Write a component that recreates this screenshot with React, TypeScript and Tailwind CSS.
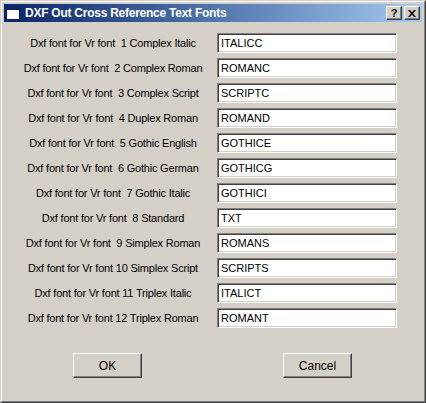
import React from "react"

const rows = [
  { n: " 1", name: "Complex Italic", value: "ITALICC" },
  { n: " 2", name: "Complex Roman", value: "ROMANC" },
  { n: " 3", name: "Complex Script", value: "SCRIPTC" },
  { n: " 4", name: "Duplex Roman", value: "ROMAND" },
  { n: " 5", name: "Gothic English", value: "GOTHICE" },
  { n: " 6", name: "Gothic German", value: "GOTHICG" },
  { n: " 7", name: "Gothic Italic", value: "GOTHICI" },
  { n: " 8", name: "Standard", value: "TXT" },
  { n: " 9", name: "Simplex Roman", value: "ROMANS" },
  { n: "10", name: "Simplex Script", value: "SCRIPTS" },
  { n: "11", name: "Triplex Italic", value: "ITALICT" },
  { n: "12", name: "Triplex Roman", value: "ROMANT" },
]

function CaptionButton({ children }: { children: React.ReactNode }) {
  return (
    <div className="w-[16px] h-[14px] bg-[#d4d0c8] border-t border-l border-white border-r border-b border-r-[#404040] border-b-[#404040] shadow-[inset_-1px_-1px_0_#808080] flex items-center justify-center text-black text-[11px] font-bold leading-none">
      {children}
    </div>
  )
}

function Button({ label }: { label: string }) {
  return (
    <div className="w-[69px] h-[25px] bg-[#d4d0c8] border border-t-white border-l-white border-r-[#404040] border-b-[#404040] shadow-[inset_-1px_-1px_0_#808080] flex items-center justify-center text-[12px] text-black">
      {label}
    </div>
  )
}

export default function App() {
  return (
    <div
      className="w-[426px] h-[403px] bg-[#d4d0c8] border border-t-[#d4d0c8] border-l-[#d4d0c8] border-r-[#404040] border-b-[#404040]"
      style={{ fontFamily: '"Liberation Sans", Arial, sans-serif' }}
    >
      <div className="h-full border border-t-white border-l-white border-r-[#808080] border-b-[#808080] p-[2px] flex flex-col">
        {/* title bar */}
        <div className="h-[18px] flex items-center bg-gradient-to-r from-[#0a246a] to-[#a6caf0] pl-[2px] pr-[2px]">
          <div className="w-[14px] h-[13px] bg-white border border-[#0a246a] border-t-[3px] mr-[5px] shrink-0" />
          <span className="text-white font-bold text-[12px] tracking-[-0.25px] flex-1">DXF Out Cross Reference Text Fonts</span>
          <div className="flex gap-[2px]">
            <CaptionButton>?</CaptionButton>
            <CaptionButton>
              <svg width="8" height="7" viewBox="0 0 8 7">
                <path d="M0 0h2l2 2.5L6 0h2L5 3.5 8 7H6L4 4.5 2 7H0l3-3.5z" fill="#000" />
              </svg>
            </CaptionButton>
          </div>
        </div>

        {/* rows */}
        <div className="flex flex-col gap-[5px] pt-[11px] pl-[8px]">
          {rows.map((r) => (
            <div key={r.n} className="flex items-center h-[20px]">
              <div className="w-[202px] text-center text-[11px] text-black whitespace-pre tracking-[-0.2px]">
                {`Dxf font for Vr font ${r.n} ${r.name}`}
              </div>
              <div className="ml-[3px] w-[180px] h-[20px] bg-white border border-t-[#808080] border-l-[#808080] border-r-white border-b-white shadow-[inset_1px_1px_0_#404040,inset_-1px_-1px_0_#d4d0c8] flex items-center pl-[3px] text-[11px] text-black">
                {r.value}
              </div>
            </div>
          ))}
        </div>

        {/* buttons */}
        <div className="flex pt-[25px] pl-[69px] gap-[141px]">
          <Button label="OK" />
          <Button label="Cancel" />
        </div>
      </div>
    </div>
  )
}
